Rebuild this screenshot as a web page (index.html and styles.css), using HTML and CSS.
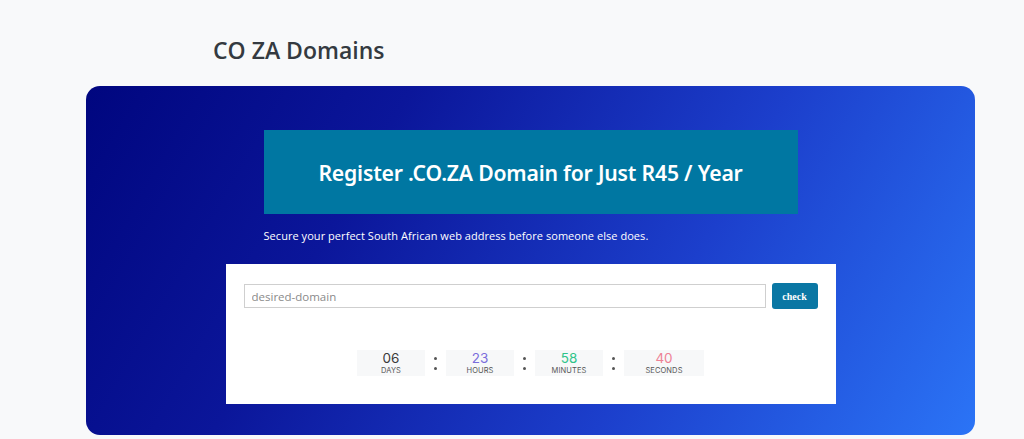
FILE: index.html
```html
<!DOCTYPE html>
<html lang="en">
<head>
<meta charset="utf-8">
<title>CO ZA Domains</title>
<link rel="stylesheet" href="styles.css">
</head>
<body>
<main class="page">
  <h1 class="page-title">CO ZA Domains</h1>
  <section class="hero">
    <div class="hero-inner">
      <div class="banner">
        <h2 class="banner-title">Register .CO.ZA Domain for Just R45 / Year</h2>
      </div>
      <p class="tagline">Secure your perfect South African web address before someone else does.</p>
    </div>
    <div class="panel">
      <form class="search" onsubmit="return false">
        <input class="search-input" type="text" placeholder="desired-domain">
        <button class="search-btn" type="submit">check</button>
      </form>
      <div class="countdown">
        <div class="unit">
          <span class="num num-days">06</span>
          <span class="lbl">DAYS</span>
        </div>
        <div class="sep"><i></i><i></i></div>
        <div class="unit">
          <span class="num num-hours">23</span>
          <span class="lbl">HOURS</span>
        </div>
        <div class="sep"><i></i><i></i></div>
        <div class="unit">
          <span class="num num-minutes">58</span>
          <span class="lbl">MINUTES</span>
        </div>
        <div class="sep"><i></i><i></i></div>
        <div class="unit unit-wide">
          <span class="num num-seconds">40</span>
          <span class="lbl">SECONDS</span>
        </div>
      </div>
    </div>
  </section>
</main>
</body>
</html>
```
FILE: styles.css
```css
* { box-sizing: border-box; }
html, body { margin: 0; padding: 0; }
body {
  background: #f8f9fa;
  font-family: "Open Sans", "Noto Sans", sans-serif;
  width: 1024px;
  height: 439px;
  overflow: hidden;
}
.page {
  display: flex;
  flex-direction: column;
  padding-top: 37px;
}
.page-title {
  margin: 0 0 22px 213px;
  font-family: "Open Sans", sans-serif;
  font-weight: 600;
  font-size: 23px;
  line-height: 27px;
  color: #343a40;
}
.hero {
  margin-left: 86px;
  width: 889px;
  height: 349px;
  border-radius: 14px;
  background: linear-gradient(120deg, #00067f 0%, #0b169a 30%, #1c3fcc 65%, #2b74f6 100%);
  padding: 44px 0 0;
  display: flex;
  flex-direction: column;
  align-items: center;
}
.hero-inner {
  width: 534px;
  display: flex;
  flex-direction: column;
}
.banner {
  height: 84px;
  background: #0077a2;
  display: flex;
  align-items: center;
  justify-content: center;
}
.banner-title {
  margin: 0;
  color: #fff;
  font-family: "Noto Sans", sans-serif;
  font-weight: 600;
  font-size: 21.2px;
  letter-spacing: -0.2px;
}
.tagline {
  margin: 14px 0 20px;
  color: #fff;
  font-family: "Open Sans", sans-serif;
  font-size: 11px;
  line-height: 16px;
  letter-spacing: 0.05px;
}
.panel {
  width: 610px;
  height: 140px;
  background: #fff;
  padding: 19px 18px 0;
  display: flex;
  flex-direction: column;
}
.search {
  display: flex;
  align-items: center;
  gap: 6px;
  margin: 0;
}
.search-input {
  flex: 1;
  height: 24px;
  border: 1px solid #cfcfcf;
  padding: 0 7px;
  font-family: "Open Sans", sans-serif;
  font-size: 11.5px;
  color: #555;
  outline: none;
}
.search-input::placeholder { color: #8a8a8a; }
.search-btn {
  width: 46px;
  height: 26px;
  border: none;
  border-radius: 3px;
  background: #0a77a4;
  color: #fff;
  font-family: "Liberation Serif", serif;
  font-weight: 700;
  font-size: 10px;
  padding: 0;
}
.countdown {
  margin-top: 41px;
  display: flex;
  justify-content: center;
  align-items: center;
}
.unit {
  width: 68px;
  height: 26px;
  background: #f7f8f9;
  display: flex;
  flex-direction: column;
  align-items: center;
  justify-content: center;
  font-family: "Inter", sans-serif;
}
.unit-wide { width: 80px; }
.num {
  font-size: 13.5px;
  line-height: 15px;
  font-weight: 400;
}
.num-days { color: #3a3a3a; }
.num-hours { color: #7b6ddc; }
.num-minutes { color: #2fc48a; }
.num-seconds { color: #ee8195; }
.lbl {
  font-size: 7.5px;
  line-height: 9px;
  font-weight: 400;
  color: #555;
  letter-spacing: 0.1px;
}
.sep {
  width: 21px;
  display: flex;
  flex-direction: column;
  align-items: center;
  gap: 7px;
}
.sep i {
  display: block;
  width: 3px;
  height: 3px;
  border-radius: 50%;
  background: #555;
}
```
